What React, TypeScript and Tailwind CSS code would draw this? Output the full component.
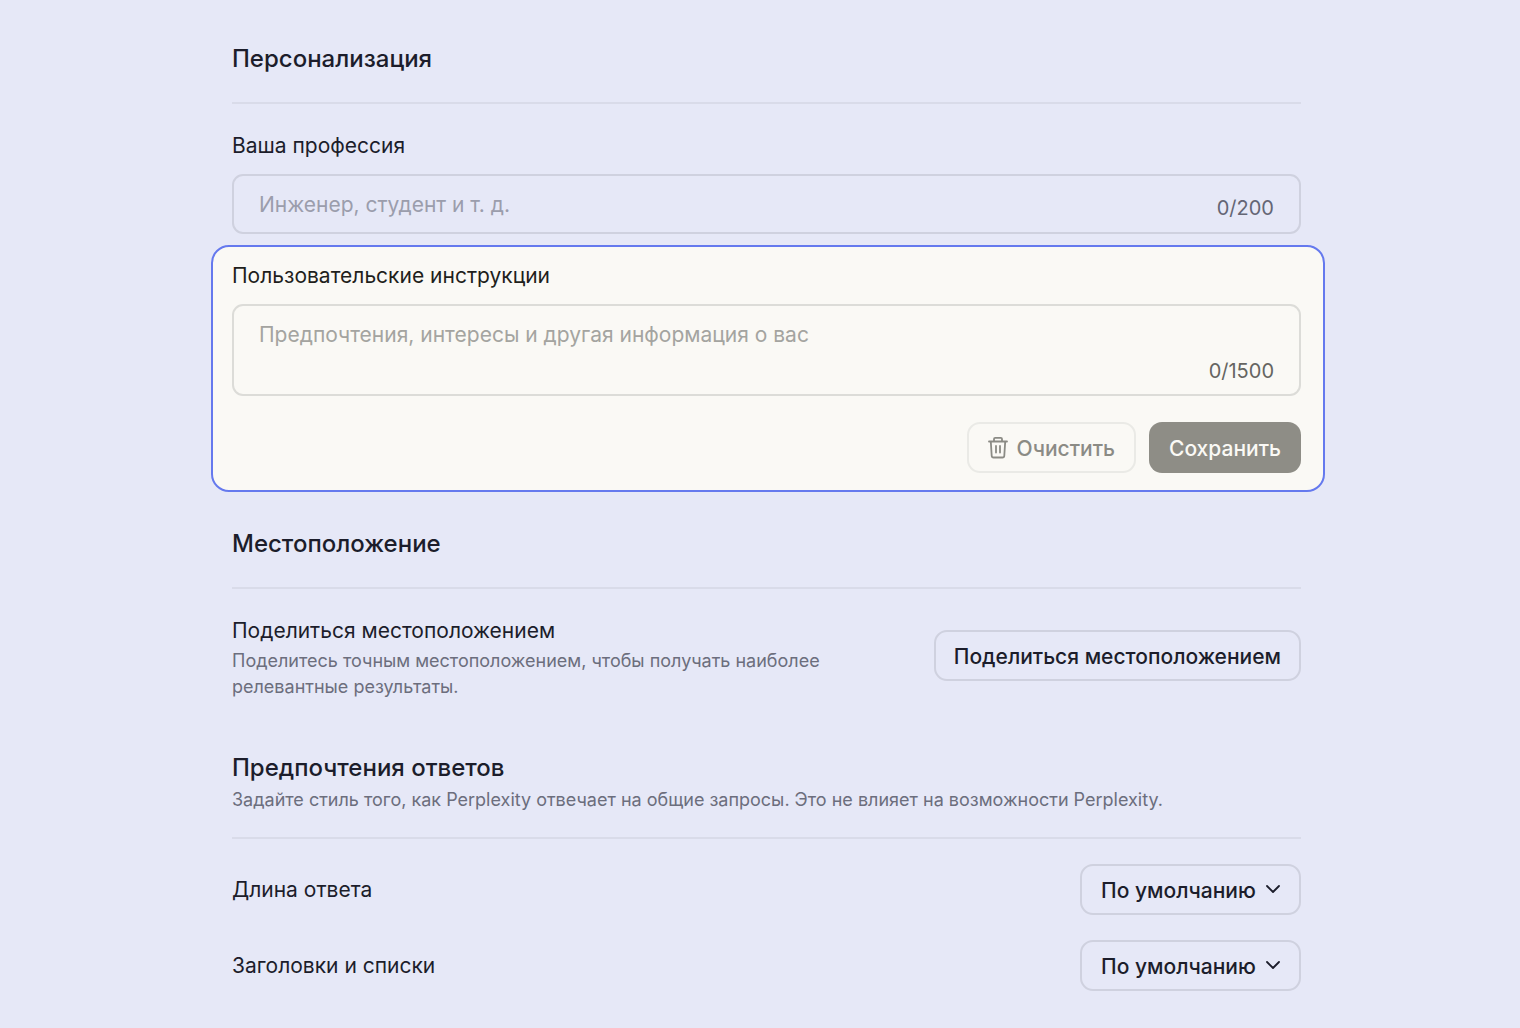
import React from "react";

const TrashIcon = () => (
	<svg
		width="20"
		height="22"
		viewBox="0 0 20 22"
		fill="none"
		stroke="currentColor"
		strokeWidth="1.8"
		strokeLinecap="round"
		strokeLinejoin="round"
		aria-hidden="true"
	>
		<path d="M1 4.5h18M6 4.5V2Q6 .9 7.2.9h5.6Q14 .9 14 2v2.5M2.8 4.5l.9 14.2q.1 1.8 1.9 1.8h8.8q1.8 0 1.9-1.8l.9-14.2M8 9v6.5M12 9v6.5" />
	</svg>
);

const Heading = ({ children }: { children: React.ReactNode }) => (
	<h2 className="text-2xl leading-8 font-medium">{children}</h2>
);

const SelectRow = ({ id, label }: { id: string; label: string }) => (
	<div className="flex items-center justify-between">
		<label htmlFor={id} className="text-[21px] leading-7">
			{label}
		</label>
		<div className="relative">
			<select
				id={id}
				className="h-[51px] w-[221px] appearance-none rounded-[13px] border-2 border-[#cfd1df] bg-transparent pt-[2px] pl-[19px] text-[21px] font-medium"
			>
				<option>По умолчанию</option>
			</select>
			<svg
				width="14"
				height="8"
				viewBox="0 0 14 8"
				fill="none"
				stroke="currentColor"
				strokeWidth="1.8"
				strokeLinecap="round"
				strokeLinejoin="round"
				className="pointer-events-none absolute top-[21px] right-[21px]"
				aria-hidden="true"
			>
				<path d="M1 1l6 6 6-6" />
			</svg>
		</div>
	</div>
);

const App = () => {
	return (
		<main className="min-h-screen bg-[#e6e8f7] pt-[43px] pr-[195px] pb-9 pl-[211px] font-[Inter,'Liberation_Sans',sans-serif] text-[#1c1d2b]">
			<section>
				<div className="mr-6 ml-[21px]">
					<div className="border-b-2 border-[#d9dbe9] pb-[27px]">
						<Heading>Персонализация</Heading>
					</div>
					<label htmlFor="profession" className="mt-7 block text-[21px] leading-7">
						Ваша профессия
					</label>
					<div className="mt-[14px] flex h-[60px] items-center rounded-[11px] border-2 border-[#cfd1df] px-[25px]">
						<input
							id="profession"
							placeholder="Инженер, студент и т. д."
							className="min-w-0 flex-1 bg-transparent pt-[2px] text-[21px] outline-none placeholder:text-[#9b9dac]"
						/>
						<span className="pt-2 text-[20px] text-[#646675]">0/200</span>
					</div>
				</div>
				<div className="mt-[11px] rounded-[18px] border-2 border-[#6579ee] bg-[#faf9f5] pt-[15px] pr-[22px] pb-[17px] pl-[19px] text-[#1f1f1c]">
					<label htmlFor="instructions" className="block text-[21px] leading-7">
						Пользовательские инструкции
					</label>
					<div className="mt-[14px] flex h-[92px] items-end rounded-[11px] border-2 border-[#dcdcd8] px-[25px] pt-[13px] pb-[9px]">
						<textarea
							id="instructions"
							placeholder="Предпочтения, интересы и другая информация о вас"
							className="h-full min-w-0 flex-1 resize-none bg-transparent text-[21px] leading-8 outline-none placeholder:text-[#a4a4a0]"
						/>
						<span className="text-[20px] leading-7 text-[#656561]">0/1500</span>
					</div>
					<div className="mt-[26px] flex justify-end gap-[13px] text-[21px] font-medium">
						<button className="flex h-[51px] items-center gap-[9px] rounded-[13px] border-2 border-[#eaeae6] px-[19px] text-[#8b8b85]">
							<TrashIcon />
							<span className="pt-[2px]">Очистить</span>
						</button>
						<button className="h-[51px] rounded-[13px] bg-[#8e8d86] px-5 pt-[2px] text-[#faf9f5]">
							Сохранить
						</button>
					</div>
				</div>
			</section>

			<div className="mr-6 ml-[21px]">
				<section className="mt-9">
					<div className="border-b-2 border-[#d9dbe9] pb-[27px]">
						<Heading>Местоположение</Heading>
					</div>
					<div className="mt-7 flex items-start justify-between">
						<div>
							<h3 className="text-[21px] leading-7">Поделиться местоположением</h3>
							<p className="mt-[3px] max-w-[610px] text-[18px] leading-[26px] text-[#6c6e7d]">
								Поделитесь точным местоположением, чтобы получать наиболее
								релевантные результаты.
							</p>
						</div>
						<button className="mt-[13px] h-[51px] rounded-[13px] border-2 border-[#cfd1df] px-[18px] pt-[2px] text-[21px] font-medium">
							Поделиться местоположением
						</button>
					</div>
				</section>

				<section className="mt-[52px]">
					<div className="border-b-2 border-[#d9dbe9] pb-6">
						<Heading>Предпочтения ответов</Heading>
						<p className="mt-[3px] text-[18px] leading-[26px] text-[#6c6e7d]">
							Задайте стиль того, как Perplexity отвечает на общие запросы. Это
							не влияет на возможности Perplexity.
						</p>
					</div>
					<div className="mt-[25px] flex flex-col gap-[25px]">
						<SelectRow id="length" label="Длина ответа" />
						<SelectRow id="headings" label="Заголовки и списки" />
					</div>
				</section>
			</div>
		</main>
	);
};

export default App;
